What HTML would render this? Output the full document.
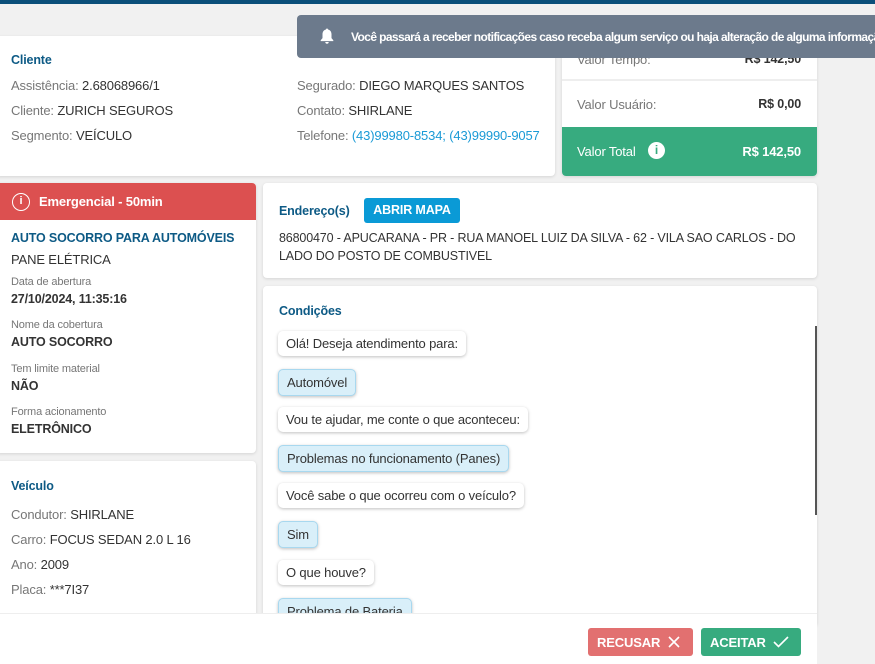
<!DOCTYPE html>
<html><head><meta charset="utf-8"><style>
*{box-sizing:border-box;margin:0;padding:0}
body{width:875px;height:664px;overflow:hidden;background:#f1f1f1;font-family:"Liberation Sans",sans-serif;font-size:13px;color:#333;position:relative;letter-spacing:-0.15px}
.abs{position:absolute}
.card{position:absolute;background:#fff;border-radius:4px;box-shadow:0 1px 3px rgba(0,0,0,.12)}
.h{color:#0d5a85;font-weight:bold;font-size:12.5px}
.lbl{color:#777}
.lbl b{color:#333;font-weight:normal}
.sm{font-size:11px;color:#777}
.val{font-weight:bold;color:#333;font-size:12.5px}
.bub{position:absolute;left:15px;padding:5px 8px;border-radius:5px;background:#fff;box-shadow:0 1px 3px rgba(0,0,0,.25);font-size:13px;color:#333;white-space:nowrap}
.bub.a{background:#d9eff9;border:1px solid #a8d8ef}
</style></head><body>
<div class="abs" style="left:0;top:0;width:875px;height:4px;background:#0b4f7a"></div>

<div class="card" style="left:-4px;top:36px;width:559px;height:140px">
  <div class="abs h" style="left:15px;top:17px">Cliente</div>
  <div class="abs lbl" style="left:15px;top:42px">Assistência: <b>2.68068966/1</b></div>
  <div class="abs lbl" style="left:15px;top:67px">Cliente: <b>ZURICH SEGUROS</b></div>
  <div class="abs lbl" style="left:15px;top:92px">Segmento: <b>VEÍCULO</b></div>
  <div class="abs lbl" style="left:301px;top:42px">Segurado: <b>DIEGO MARQUES SANTOS</b></div>
  <div class="abs lbl" style="left:301px;top:67px">Contato: <b>SHIRLANE</b></div>
  <div class="abs lbl" style="left:301px;top:92px">Telefone: <span style="color:#1a9ad6">(43)99980-8534; (43)99990-9057</span></div>
</div>

<div class="card" style="left:562px;top:30px;width:255px;height:146px;overflow:hidden">
  <div class="abs lbl" style="left:15px;top:22px">Valor Tempo:</div>
  <div class="abs val" style="right:16px;top:22px">R$ 142,50</div>
  <div class="abs" style="left:0;top:49px;width:255px;height:2px;background:#eee"></div>
  <div class="abs lbl" style="left:15px;top:67px">Valor Usuário:</div>
  <div class="abs val" style="right:16px;top:67px">R$ 0,00</div>
  <div class="abs" style="left:0;top:97px;width:255px;height:49px;background:#37ab7f;color:#fff">
    <div class="abs" style="left:15px;top:17px;font-size:13px">Valor Total</div>
    <div class="abs" style="left:86px;top:15px;width:17px;height:17px;border-radius:50%;background:#fff;color:#37ab7f;font-weight:bold;font-size:12px;text-align:center;line-height:17px">i</div>
    <div class="abs" style="right:16px;top:17px;font-weight:bold">R$ 142,50</div>
  </div>
</div>

<div class="abs" style="left:297px;top:15px;width:590px;height:43px;background:#6c7a8c;border-radius:4px;color:#fff;font-size:12px;font-weight:bold;white-space:nowrap;overflow:hidden">
  <svg class="abs" style="left:23px;top:13px" width="14" height="16" viewBox="0 0 14 16"><path d="M7 0.5c.7 0 1 .5 1 1 2.3.5 3.5 2.4 3.5 4.8v3.8l1.8 2.2v.8H.7v-.8l1.8-2.2V6.3C2.5 3.9 3.7 2 6 1.5c0-.5.3-1 1-1zM5.3 14h3.4a1.7 1.7 0 0 1-3.4 0z" fill="#fff"/></svg>
  <div class="abs" style="left:54px;top:15px;letter-spacing:-0.6px">Você passará a receber notificações caso receba algum serviço ou haja alteração de alguma informação</div>
</div>

<div class="card" style="left:-4px;top:183px;width:260px;height:270px;overflow:hidden">
  <div class="abs" style="left:0;top:0;width:260px;height:37px;background:#dc5050;color:#fff;font-weight:bold;font-size:13px">
    <div class="abs" style="left:16px;top:10px;width:18px;height:18px;border:1.5px solid #fff;border-radius:50%;text-align:center;font-size:11px;line-height:15px">i</div>
    <div class="abs" style="left:43px;top:11px">Emergencial - 50min</div>
  </div>
  <div class="abs h" style="left:15px;top:48px">AUTO SOCORRO PARA AUTOMÓVEIS</div>
  <div class="abs" style="left:15px;top:69px">PANE ELÉTRICA</div>
  <div class="abs sm" style="left:15px;top:93px">Data de abertura</div>
  <div class="abs val" style="left:15px;top:109px">27/10/2024, 11:35:16</div>
  <div class="abs sm" style="left:15px;top:136px">Nome da cobertura</div>
  <div class="abs val" style="left:15px;top:152px">AUTO SOCORRO</div>
  <div class="abs sm" style="left:15px;top:180px">Tem limite material</div>
  <div class="abs val" style="left:15px;top:196px">NÃO</div>
  <div class="abs sm" style="left:15px;top:223px">Forma acionamento</div>
  <div class="abs val" style="left:15px;top:239px">ELETRÔNICO</div>
</div>

<div class="card" style="left:-4px;top:461px;width:260px;height:160px">
  <div class="abs h" style="left:15px;top:18px">Veículo</div>
  <div class="abs lbl" style="left:15px;top:46px">Condutor: <b>SHIRLANE</b></div>
  <div class="abs lbl" style="left:15px;top:71px">Carro: <b>FOCUS SEDAN 2.0 L 16</b></div>
  <div class="abs lbl" style="left:15px;top:96px">Ano: <b>2009</b></div>
  <div class="abs lbl" style="left:15px;top:121px">Placa: <b>***7I37</b></div>
</div>

<div class="card" style="left:263px;top:183px;width:554px;height:95px">
  <div class="abs h" style="left:16px;top:21px">Endereço(s)</div>
  <div class="abs" style="left:101px;top:15px;width:96px;height:25px;background:#0a9ad6;border-radius:3px;color:#fff;font-weight:bold;font-size:12.5px;text-align:center;line-height:25px">ABRIR MAPA</div>
  <div class="abs" style="left:16px;top:46px;width:520px;line-height:18px;font-size:12.5px">86800470 - APUCARANA - PR - RUA MANOEL LUIZ DA SILVA - 62 - VILA SAO CARLOS - DO LADO DO POSTO DE COMBUSTIVEL</div>
</div>

<div class="card" style="left:263px;top:286px;width:554px;height:340px;overflow:hidden">
  <div class="abs h" style="left:16px;top:18px">Condições</div>
  <div class="bub" style="top:45px">Olá! Deseja atendimento para:</div>
  <div class="bub a" style="top:83px">Automóvel</div>
  <div class="bub" style="top:121px">Vou te ajudar, me conte o que aconteceu:</div>
  <div class="bub a" style="top:159px">Problemas no funcionamento (Panes)</div>
  <div class="bub" style="top:197px">Você sabe o que ocorreu com o veículo?</div>
  <div class="bub a" style="top:235px">Sim</div>
  <div class="bub" style="top:274px">O que houve?</div>
  <div class="bub a" style="top:312px">Problema de Bateria</div>
  <div class="abs" style="left:552px;top:40px;width:2px;height:189px;background:#555"></div>
</div>

<div class="abs" style="left:0;top:613px;width:817px;height:51px;background:#fff;border-top:1px solid #eee">
  <div class="abs" style="left:588px;top:14px;width:105px;height:28px;background:#e27070;border-radius:3px;color:#fff;font-weight:bold;font-size:13px">
    <div class="abs" style="left:9px;top:7px">RECUSAR</div>
    <svg class="abs" style="left:80px;top:8px" width="12" height="12" viewBox="0 0 12 12"><path d="M1 1L11 11M11 1L1 11" stroke="#fff" stroke-width="1.6"/></svg>
  </div>
  <div class="abs" style="left:701px;top:14px;width:100px;height:28px;background:#37ab7f;border-radius:3px;color:#fff;font-weight:bold;font-size:13px">
    <div class="abs" style="left:9px;top:7px">ACEITAR</div>
    <svg class="abs" style="left:72px;top:8px" width="16" height="12" viewBox="0 0 16 12"><path d="M1 6L5.5 10.5L15 1" stroke="#fff" stroke-width="1.6" fill="none"/></svg>
  </div>
</div>
</body></html>
